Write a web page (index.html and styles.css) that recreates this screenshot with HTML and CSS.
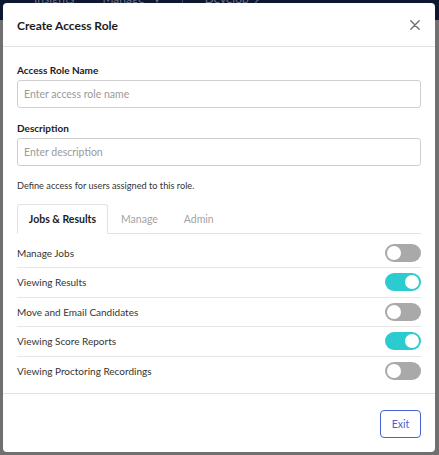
FILE: index.html
```html
<!DOCTYPE html>
<html>
<head>
<meta charset="utf-8">
<link rel="stylesheet" href="styles.css">
</head>
<body>
<div class="nav">
  <span class="nav-item">Insights</span>
  <span class="nav-item">Manage &nbsp;&nbsp;&#9662;</span>
  <span class="nav-sep"></span>
  <span class="nav-item">Develop &nbsp;&#8599;</span>
</div>
<div class="modal">
  <div class="modal-header">
    <h1 class="title">Create Access Role</h1>
    <svg class="close" width="10" height="10" viewBox="0 0 10 10"><path d="M0.8 0.8L9.2 9.2M9.2 0.8L0.8 9.2" stroke="#707070" stroke-width="1.4" stroke-linecap="round"/></svg>
  </div>
  <div class="modal-body">
    <label class="label">Access Role Name</label>
    <div class="input">Enter access role name</div>
    <label class="label">Description</label>
    <div class="input">Enter description</div>
    <p class="hint">Define access for users assigned to this role.</p>
    <div class="tabs">
      <div class="tab active">Jobs &amp; Results</div>
      <div class="tab">Manage</div>
      <div class="tab">Admin</div>
    </div>
    <div class="rows">
      <div class="row"><span>Manage Jobs</span><span class="toggle"></span></div>
      <div class="row"><span>Viewing Results</span><span class="toggle on"></span></div>
      <div class="row"><span>Move and Email Candidates</span><span class="toggle"></span></div>
      <div class="row"><span>Viewing Score Reports</span><span class="toggle on"></span></div>
      <div class="row"><span>Viewing Proctoring Recordings</span><span class="toggle"></span></div>
    </div>
  </div>
  <div class="modal-footer">
    <button class="btn">Exit</button>
  </div>
</div>
</body>
</html>
```
FILE: styles.css
```css
* { box-sizing: border-box; }
html, body { margin: 0; padding: 0; }
body {
  width: 439px;
  height: 455px;
  overflow: hidden;
  background: #707070;
  font-family: Lato, "Open Sans", sans-serif;
  position: relative;
}
.nav {
  height: 20px;
  background: #0d1730;
  display: flex;
  align-items: flex-start;
  gap: 28px;
  padding-left: 34px;
  overflow: hidden;
}
.nav-item {
  color: #6b7386;
  font-size: 12px;
  line-height: 12px;
  margin-top: -7px;
}
.nav-sep {
  width: 1px;
  height: 5px;
  background: #3a4460;
  margin: 0 -6px;
}
.modal {
  position: absolute;
  left: 3px;
  top: 3px;
  width: 432px;
  height: 449px;
  background: #fff;
  border-radius: 4px;
  display: flex;
  flex-direction: column;
}
.modal-header {
  height: 44px;
  border-bottom: 1px solid #e2e2e2;
  display: flex;
  align-items: center;
  justify-content: space-between;
  padding: 1px 14px 0 14px;
}
.title {
  margin: 0;
  font-size: 12px;
  font-weight: 700;
  color: #1c1c1c;
}
.close { display: block; margin-right: 1px; }
.modal-body {
  padding: 17px 14px 0 14px;
  flex: 1;
  display: flex;
  flex-direction: column;
}
.label {
  font-size: 10px;
  font-weight: 700;
  color: #1c1c1c;
  line-height: 12px;
  margin-bottom: 4px;
}
.input {
  height: 28px;
  border: 1px solid #cfcfcf;
  border-radius: 3px;
  padding: 0 6px;
  font-size: 10.5px;
  color: #9a9a9a;
  display: flex;
  align-items: center;
  margin-bottom: 14px;
}
.hint {
  margin: -1px 0 11px 0;
  font-size: 9.2px;
  color: #333;
  line-height: 14px;
}
.tabs {
  display: flex;
  border-bottom: 1px solid #e2e2e2;
  height: 30px;
}
.tab {
  font-size: 10.5px;
  color: #a3a3a3;
  display: flex;
  align-items: center;
  height: 30px;
  white-space: nowrap;
}
.tab.active {
  color: #1c1c1c;
  font-weight: 700;
  border: 1px solid #e2e2e2;
  border-bottom: 1px solid #fff;
  border-radius: 3px 3px 0 0;
  background: #fff;
  width: 91px;
  justify-content: center;
}
.tab + .tab { padding-left: 13px; padding-right: 13px; }
.rows { display: flex; flex-direction: column; }
.row {
  display: flex;
  align-items: center;
  justify-content: space-between;
  height: 29.5px;
  border-bottom: 1px solid #e6e6e6;
  font-size: 10px;
  color: #333;
}
.row:first-child { height: 34px; padding-top: 4px; }
.row:last-child { border-bottom: none; }
.toggle {
  width: 36px;
  height: 18px;
  border-radius: 9px;
  background: #a9a9a9;
  position: relative;
}
.toggle::after {
  content: "";
  position: absolute;
  top: 2px;
  left: 2px;
  width: 14px;
  height: 14px;
  border-radius: 50%;
  background: #fff;
}
.toggle.on { background: #2ccbd0; }
.toggle.on::after { left: 20px; }
.modal-footer {
  height: 59px;
  border-top: 1px solid #e2e2e2;
  display: flex;
  align-items: center;
  justify-content: flex-end;
  padding: 0 14px;
}
.btn {
  width: 41px;
  height: 28px;
  border: 1.5px solid #4a5fd0;
  border-radius: 4px;
  background: #fff;
  color: #4a5fd0;
  font-family: Lato, sans-serif;
  font-size: 10.5px;
  padding: 0;
  margin-top: 2px;
}
```
